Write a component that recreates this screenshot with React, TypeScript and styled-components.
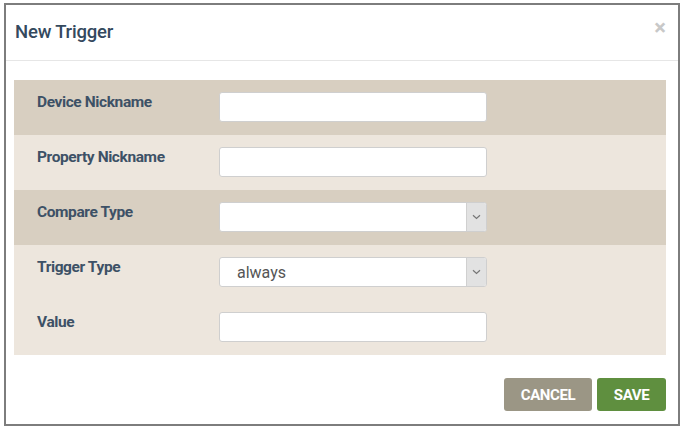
import React from "react";
import styled, { createGlobalStyle } from "styled-components";

const Global = createGlobalStyle`
  html, body { margin: 0; padding: 0; background: #ffffff; }
  body { font-family: Roboto, "Liberation Sans", sans-serif; }
  * { box-sizing: border-box; }
`;

const Page = styled.div`
  width: 684px;
  height: 432px;
  padding: 3px 4px 6px 4px;
`;

const Dialog = styled.div`
  width: 676px;
  height: 423px;
  border: 2px solid #7d7d7d;
  background: #fff;
  display: flex;
  flex-direction: column;
`;

const Header = styled.div`
  height: 56px;
  display: flex;
  align-items: center;
  justify-content: space-between;
  padding: 0 12px 0 9px;
  border-bottom: 1px solid #e6e6e6;
`;

const Title = styled.h1`
  margin: 0;
  font-size: 18.5px;
  font-weight: 500;
  color: #34495e;
  letter-spacing: -0.2px;
  margin-top: -2px;
`;

const Close = styled.span`
  font-size: 22px;
  color: #c8c8c8;
  font-weight: 700;
  margin-top: -10px;
  line-height: 1;
`;

const Body = styled.div`
  padding: 19px 12px 0 8px;
  display: flex;
  flex-direction: column;
`;

const Row = styled.div<{ $dark: boolean }>`
  height: 55px;
  background: ${(p) => (p.$dark ? "#d8cfc1" : "#ede6dd")};
  display: grid;
  grid-template-columns: 182px 268px;
  align-items: start;
  padding: 12px 0 0 23px;
`;

const Label = styled.label`
  font-size: 15.5px;
  font-weight: 700;
  color: #3d5166;
  letter-spacing: -0.4px;
  padding-top: 1px;
  line-height: 18px;
`;

const Input = styled.div`
  height: 30px;
  background: #fff;
  border: 1px solid #cfcfcf;
  border-radius: 3px;
  display: flex;
  align-items: center;
  justify-content: space-between;
  overflow: hidden;
`;

const Value = styled.span`
  font-size: 16px;
  color: #555;
  padding-left: 17px;
`;

const Arrow = styled.span`
  width: 20px;
  height: 100%;
  background: #e2e2e2;
  border-left: 1px solid #d0d0d0;
  display: flex;
  align-items: center;
  justify-content: center;
`;

const Footer = styled.div`
  display: flex;
  justify-content: flex-end;
  gap: 5px;
  padding: 23px 12px 0 0;
`;

const Button = styled.button<{ $variant: "cancel" | "save" }>`
  height: 33px;
  border: none;
  border-radius: 3px;
  background: ${(p) => (p.$variant === "save" ? "#5f8f3f" : "#9b9685")};
  color: #fff;
  font-family: Roboto, "Liberation Sans", sans-serif;
  font-weight: 700;
  font-size: 15px;
  letter-spacing: -0.4px;
  padding: 0;
  width: ${(p) => (p.$variant === "save" ? "69px" : "88px")};
`;

const Chevron = () => (
  <svg width="9" height="6" viewBox="0 0 9 6">
    <path d="M1 1.2 L4.5 4.5 L8 1.2" fill="none" stroke="#777" strokeWidth="1.2" />
  </svg>
);

const rows: { label: string; kind: "text" | "select"; dark: boolean; value?: string }[] = [
  { label: "Device Nickname", kind: "text", dark: true },
  { label: "Property Nickname", kind: "text", dark: false },
  { label: "Compare Type", kind: "select", dark: true },
  { label: "Trigger Type", kind: "select", dark: false, value: "always" },
  { label: "Value", kind: "text", dark: false },
];

export default function App() {
  return (
    <Page>
      <Global />
      <Dialog>
        <Header>
          <Title>New Trigger</Title>
          <Close>×</Close>
        </Header>
        <Body>
          {rows.map((r) => (
            <Row key={r.label} $dark={r.dark}>
              <Label>{r.label}</Label>
              <Input>
                <Value>{r.value ?? ""}</Value>
                {r.kind === "select" && (
                  <Arrow>
                    <Chevron />
                  </Arrow>
                )}
              </Input>
            </Row>
          ))}
        </Body>
        <Footer>
          <Button $variant="cancel">CANCEL</Button>
          <Button $variant="save">SAVE</Button>
        </Footer>
      </Dialog>
    </Page>
  );
}
